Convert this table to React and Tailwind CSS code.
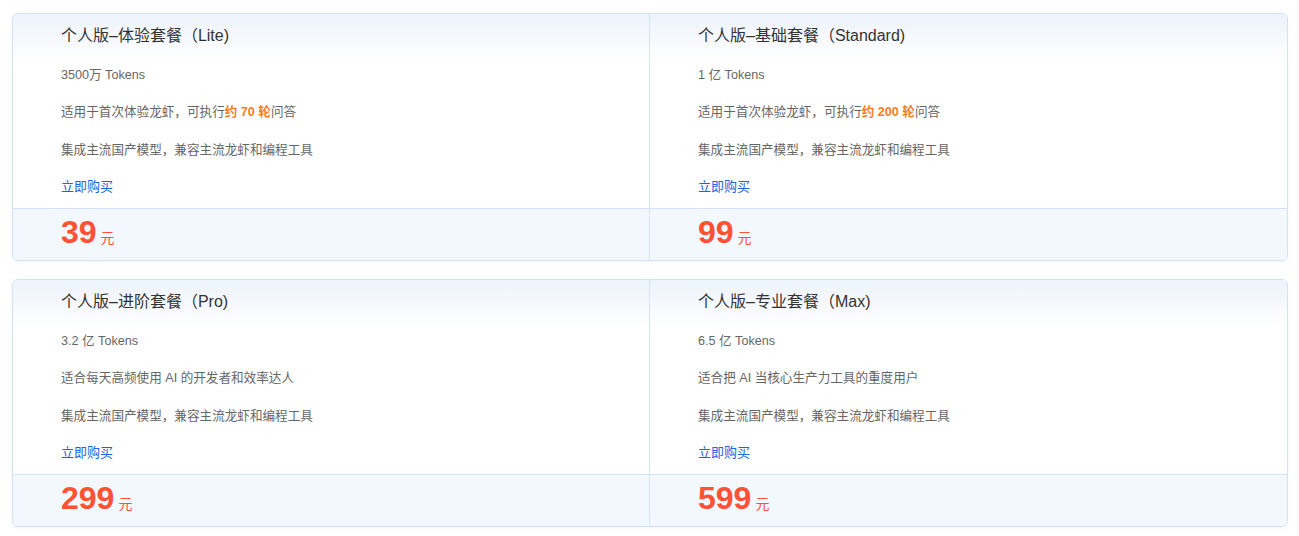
const plans = [
  [
    {
      title: "个人版–体验套餐（Lite)",
      tokens: "3500万 Tokens",
      desc: ["适用于首次体验龙虾，可执行", "约 70 轮", "问答"],
      price: "39",
    },
    {
      title: "个人版–基础套餐（Standard)",
      tokens: "1 亿 Tokens",
      desc: ["适用于首次体验龙虾，可执行", "约 200 轮", "问答"],
      price: "99",
    },
  ],
  [
    {
      title: "个人版–进阶套餐（Pro)",
      tokens: "3.2 亿 Tokens",
      desc: ["适合每天高频使用 AI 的开发者和效率达人"],
      price: "299",
    },
    {
      title: "个人版–专业套餐（Max)",
      tokens: "6.5 亿 Tokens",
      desc: ["适合把 AI 当核心生产力工具的重度用户"],
      price: "599",
    },
  ],
]

const font = "font-['Liberation_Sans','Noto_Sans_CJK_SC',sans-serif]"

function PlanBody({ plan, first }) {
  return (
    <div className={`pl-[48px] pt-[12px] pb-[11px] ${first ? "" : "border-l border-[#d6e4f7]"}`}>
      <div className="text-[16px] leading-[20px] text-[#333]">{plan.title}</div>
      <div className="mt-[19px] text-[12.6px] leading-[20px] text-[#666]">{plan.tokens}</div>
      <div className="mt-[17px] text-[12.6px] leading-[20px] text-[#666]">
        {plan.desc[0]}
        {plan.desc[1] && <span className="font-bold text-[#ff7a1a]">{plan.desc[1]}</span>}
        {plan.desc[2]}
      </div>
      <div className="mt-[18px] text-[12.6px] leading-[20px] text-[#666]">集成主流国产模型，兼容主流龙虾和编程工具</div>
      <div className="mt-[17px] text-[13px] leading-[20px]">
        <a href="#" className="text-[#1a66e0]">立即购买</a>
      </div>
    </div>
  )
}

function PlanPrice({ plan, first }) {
  return (
    <div className={`h-[51px] pl-[48px] pb-[6px] flex items-center ${first ? "" : "border-l border-[#d6e4f7]"}`}>
      <div className="flex items-baseline">
        <span className="text-[32px] leading-none font-bold text-[#ff5133]">{plan.price}</span>
        <span className="ml-[4px] text-[14px] leading-none text-[#ff5133]">元</span>
      </div>
    </div>
  )
}

export default function App() {
  return (
    <div className={`w-[1299px] h-[536px] bg-white pt-[13px] px-[12px] ${font}`}>
      {plans.map((row, i) => (
        <div
          key={i}
          className={`w-[1276px] rounded-[6px] border border-[#d3e2f6] overflow-hidden shadow-[0_1px_3px_rgba(60,110,180,0.08)] ${i > 0 ? "mt-[18px]" : ""}`}
        >
          <div className="grid grid-cols-[636px_1fr] bg-[linear-gradient(180deg,#edf3fc_0px,#ffffff_48px)]">
            {row.map((p, j) => (
              <PlanBody key={j} plan={p} first={j === 0} />
            ))}
          </div>
          <div className="grid grid-cols-[636px_1fr] bg-[#f3f8fe] border-t border-[#d3e2f6]">
            {row.map((p, j) => (
              <PlanPrice key={j} plan={p} first={j === 0} />
            ))}
          </div>
        </div>
      ))}
    </div>
  )
}
